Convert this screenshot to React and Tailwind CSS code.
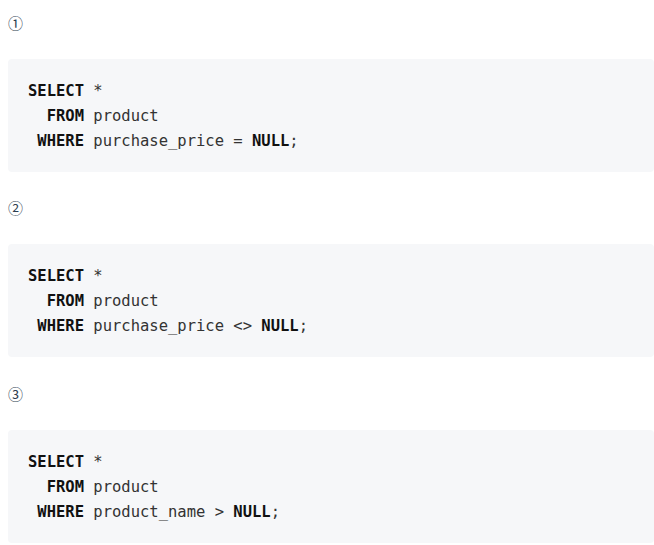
const BLOCKS = [
  { mark: '①', lines: [
    [['k', 'SELECT'], ['t', ' *']],
    [['k', '  FROM'], ['t', ' product']],
    [['k', ' WHERE'], ['t', ' purchase_price = '], ['k', 'NULL'], ['t', ';']],
  ] },
  { mark: '②', lines: [
    [['k', 'SELECT'], ['t', ' *']],
    [['k', '  FROM'], ['t', ' product']],
    [['k', ' WHERE'], ['t', ' purchase_price <> '], ['k', 'NULL'], ['t', ';']],
  ] },
  { mark: '③', lines: [
    [['k', 'SELECT'], ['t', ' *']],
    [['k', '  FROM'], ['t', ' product']],
    [['k', ' WHERE'], ['t', ' product_name > '], ['k', 'NULL'], ['t', ';']],
  ] },
];

export default function App() {
  return (
    <div className="bg-white w-[654px] h-[545px] overflow-hidden pl-2 pt-[13px]">
      {BLOCKS.map((b, i) => (
        <div key={i} className={i === 1 ? 'mt-[26px]' : i === 2 ? 'mt-[27px]' : ''}>
          <p className="text-[15px] leading-[20px] h-[20px] text-[#2c3e50] font-['Noto_Sans_CJK_SC',sans-serif]">{b.mark}</p>
          <pre className="mt-[26px] bg-[#f6f7f9] rounded-[4px] px-5 pt-5 pb-[18px] text-[15.5px] leading-[25px] text-[#333] font-['DejaVu_Sans_Mono',monospace]">
            {b.lines.map((ln, j) => (
              <div key={j}>
                {ln.map(([kind, s], k) =>
                  kind === 'k'
                    ? <span key={k} className="font-bold text-[#111]">{s}</span>
                    : <span key={k}>{s}</span>
                )}
              </div>
            ))}
          </pre>
        </div>
      ))}
    </div>
  );
}
